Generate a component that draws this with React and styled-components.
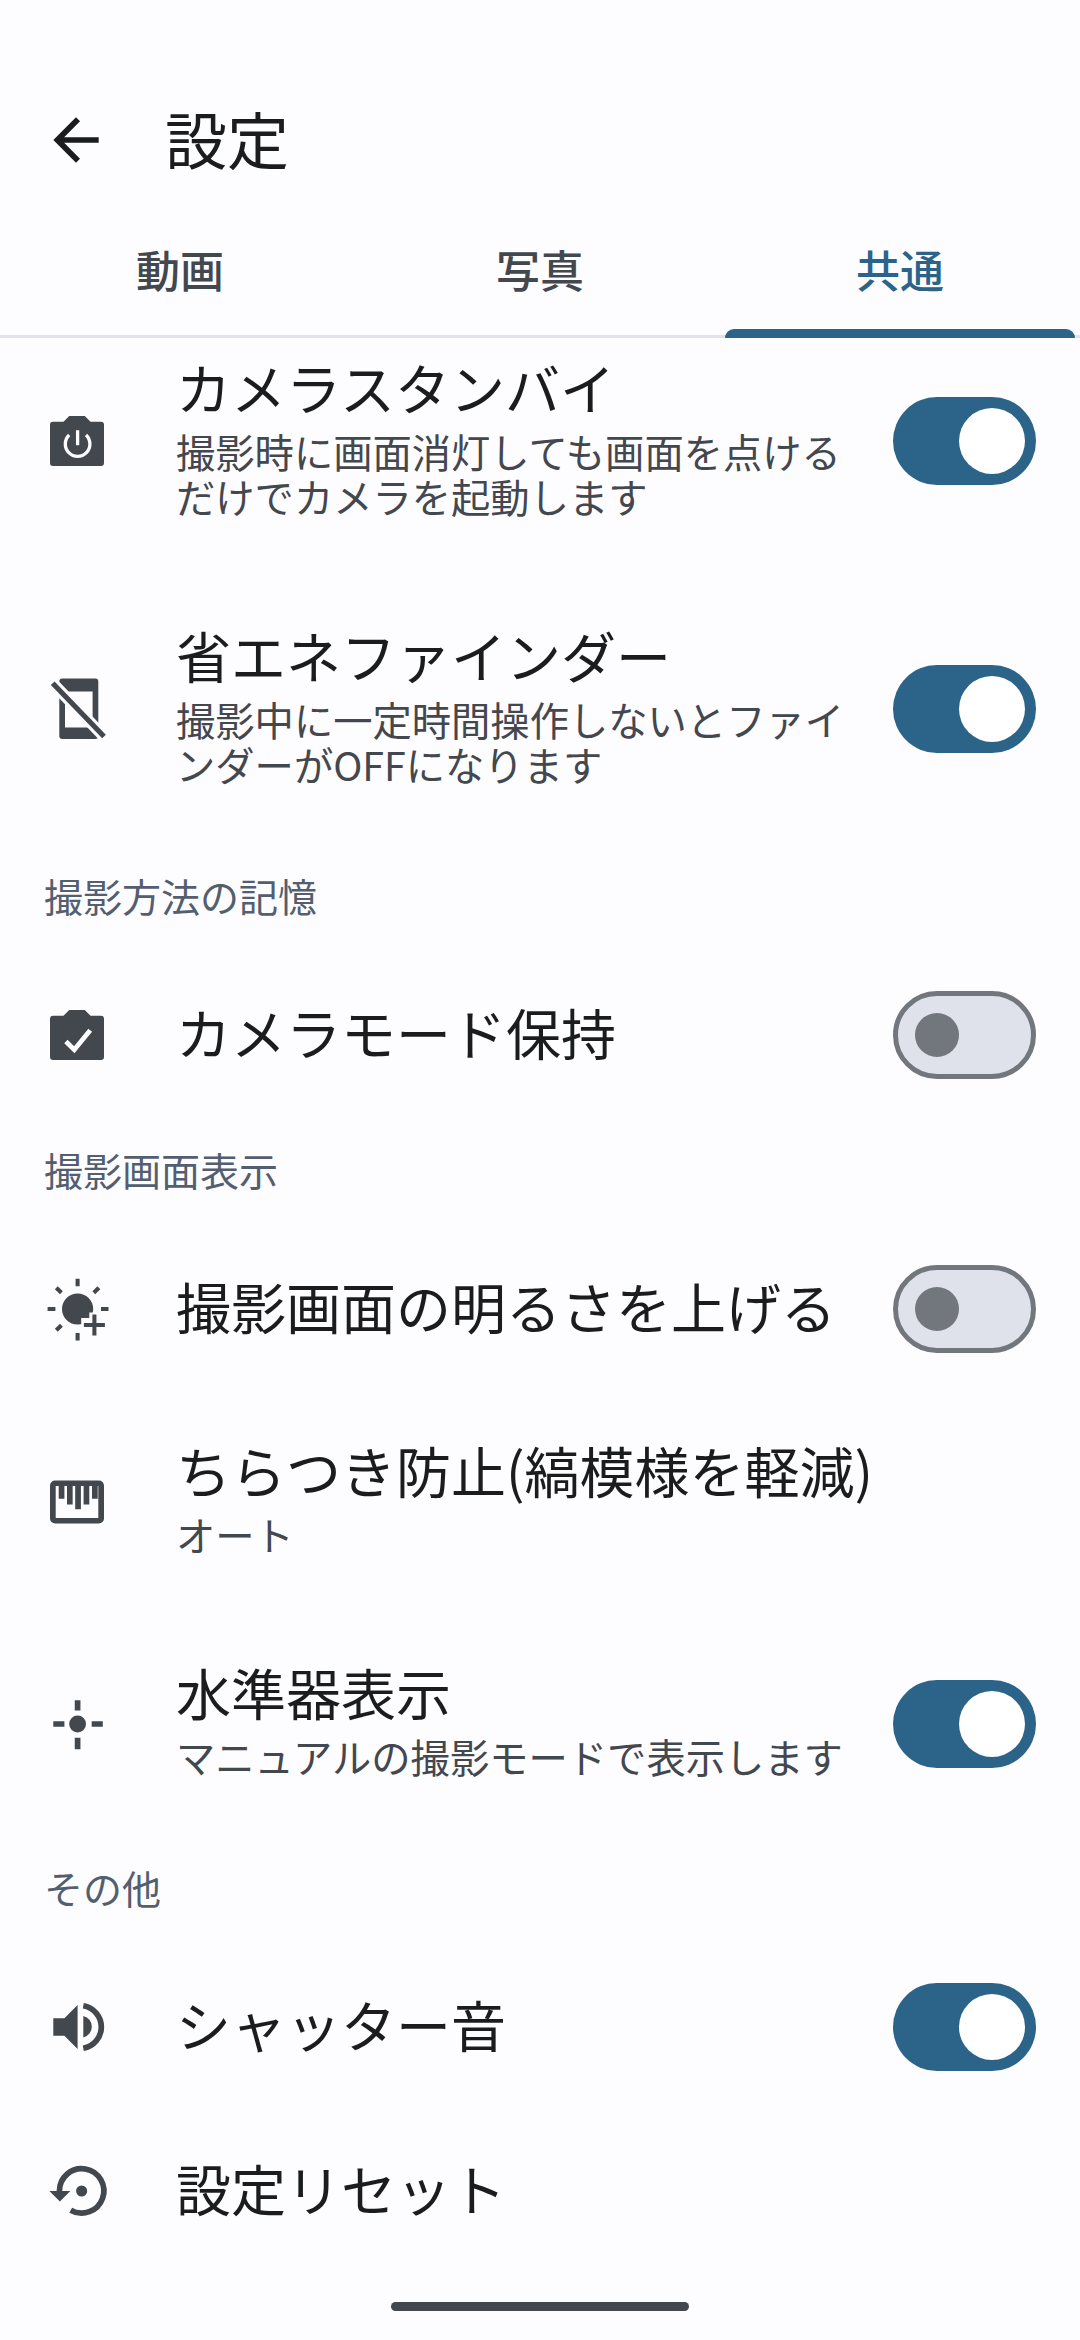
import React from "react";
import styled, { createGlobalStyle } from "styled-components";

const bg = "#fdfcff";
const ink = "#1a1c1e";
const muted = "#43474e";
const accent = "#2c6389";

const GlobalStyle = createGlobalStyle`
  html, body {
    margin: 0;
    padding: 0;
    background: ${bg};
  }
  * {
    box-sizing: border-box;
  }
`;

const Icon = ({ children }) => (
  <IconSvg viewBox="0 0 24 24" fill={muted}>
    {children}
  </IconSvg>
);

const cameraBody =
  "M9.4 3.7h5.2l1.9 1.9H20a1 1 0 0 1 1 1v12.7a1 1 0 0 1-1 1H4a1 1 0 0 1-1-1V6.6a1 1 0 0 1 1-1h3.5z";

const CameraPowerIcon = () => (
  <Icon>
    <path d={cameraBody} />
    <g fill="none" stroke={bg} strokeWidth="1.1">
      <path d="M9.4 10a4.1 4.1 0 1 0 5.6 0" />
      <path d="M12.2 8.4v5" />
    </g>
  </Icon>
);

const PhoneOffIcon = () => (
  <Icon>
    <path
      fillRule="evenodd"
      d="M7.1 1.8h11a1 1 0 0 1 1 1V21a1 1 0 0 1-1 1h-11a1 1 0 0 1-1-1V2.8a1 1 0 0 1 1-1zM8 6.2v12h9.2v-12z"
    />
    <path d="M3.9 3.4L21 21.2" stroke={bg} strokeWidth="3.8" fill="none" />
    <path d="M3.9 3.4L21 21.2" stroke={muted} strokeWidth="1.7" fill="none" />
  </Icon>
);

const CameraCheckIcon = () => (
  <Icon>
    <path d={cameraBody} />
    <path d="M8.3 14.2l2.8 2.7 5.3-6.5" fill="none" stroke={bg} strokeWidth="1.6" />
  </Icon>
);

const BrightnessIcon = () => (
  <Icon>
    <circle cx="12.2" cy="12" r="5.2" />
    <path d="M16.1 13.2H24V24H13.4v-9h2.7z" fill={bg} />
    <g fill="none" stroke={muted} strokeWidth="1.35">
      <path d="M12.2 1.9v2.5M12.2 20v2.5M2.2 12h2.6M20 12h2.5" />
      <path d="M5.1 4.9l1.7 1.7M19.3 4.9l-1.7 1.7M5.1 19.1l1.7-1.7" />
      <path d="M14.3 17.3h7M17.8 13.8v7" />
    </g>
  </Icon>
);

const PianoIcon = () => (
  <Icon>
    <path
      fillRule="evenodd"
      d="M4.7 4.8h14.6a1.7 1.7 0 0 1 1.7 1.7v11a1.7 1.7 0 0 1-1.7 1.7H4.7A1.7 1.7 0 0 1 3 17.5v-11a1.7 1.7 0 0 1 1.7-1.7zM4.9 6.65V17.3h14.2V6.65h-.2v4.25H17V6.65h-.9v6.15h-1.9V6.65h-.9v7.75h-1.9V6.65h-.85v6.15H8.67V6.65H7.8v4.25H5.9V6.65z"
    />
  </Icon>
);

const LevelIcon = () => (
  <Icon>
    <circle cx="12.2" cy="12" r="2.8" />
    <path
      d="M12.2 4.1v3.4M12.2 16.6v3.8M4.1 12h3.7M16.9 12h3.7"
      fill="none"
      stroke={muted}
      strokeWidth="1.9"
    />
  </Icon>
);

const SpeakerIcon = () => (
  <Icon>
    <path d="M4.1 9.1h3.7l4.4-4.4v14.6l-4.4-4.4H4.1z" />
    <path d="M14.1 8.3a3.7 3.7 0 0 1 0 7.2z" />
    <path d="M14.1 4.9a7.2 7.2 0 0 1 0 14.2" fill="none" stroke={muted} strokeWidth="1.9" />
  </Icon>
);

const ResetIcon = () => (
  <Icon>
    <path d="M6.15 12A7.4 7.4 0 1 1 9.9 18.4" fill="none" stroke={muted} strokeWidth="1.9" />
    <path d="M2.8 12h7l-3.5 3.5z" />
    <circle cx="13.55" cy="12" r="1.85" />
  </Icon>
);

const tabs = [
  { label: "動画", color: muted },
  { label: "写真", color: muted },
  { label: "共通", color: accent, active: true },
];

const SettingRow = ({ icon, title, sub, toggle, height }) => (
  <Row $height={height}>
    <IconSlot>{icon}</IconSlot>
    <TextBlock>
      <Title>{title}</Title>
      {sub && <Sub>{sub}</Sub>}
    </TextBlock>
    {toggle && (
      <Toggle $on={toggle === "on"}>
        <Thumb $on={toggle === "on"} />
      </Toggle>
    )}
  </Row>
);

const App = () => {
  return (
    <Page>
      <GlobalStyle />
      <Header>
        <BackButton>
          <svg viewBox="0 0 24 24" width="68" height="68" fill={ink}>
            <path d="M20 11H7.83l5.59-5.59L12 4l-8 8 8 8 1.41-1.41L7.83 13H20v-2z" />
          </svg>
        </BackButton>
        <HeaderTitle>設定</HeaderTitle>
      </Header>
      <TabBar>
        {tabs.map((tab) => (
          <Tab key={tab.label} $color={tab.color} $active={tab.active}>
            {tab.label}
          </Tab>
        ))}
      </TabBar>
      <List>
        <ScrollContent>
          <SettingRow
            height={268}
            icon={<CameraPowerIcon />}
            title="カメラスタンバイ"
            sub={"撮影時に画面消灯しても画面を点ける\nだけでカメラを起動します"}
            toggle="on"
          />
          <SettingRow
            height={268}
            icon={<PhoneOffIcon />}
            title="省エネファインダー"
            sub={"撮影中に一定時間操作しないとファイ\nンダーがOFFになります"}
            toggle="on"
          />
          <SectionHead>撮影方法の記憶</SectionHead>
          <SettingRow icon={<CameraCheckIcon />} title="カメラモード保持" toggle="off" />
          <SectionHead>撮影画面表示</SectionHead>
          <SettingRow icon={<BrightnessIcon />} title="撮影画面の明るさを上げる" toggle="off" />
          <SettingRow
            height={222}
            icon={<PianoIcon />}
            title="ちらつき防止(縞模様を軽減)"
            sub="オート"
          />
          <SettingRow
            height={222}
            icon={<LevelIcon />}
            title="水準器表示"
            sub="マニュアルの撮影モードで表示します"
            toggle="on"
          />
          <SectionHead>その他</SectionHead>
          <SettingRow icon={<SpeakerIcon />} title="シャッター音" toggle="on" />
          <SettingRow icon={<ResetIcon />} title="設定リセット" />
        </ScrollContent>
        <HomeBar />
      </List>
    </Page>
  );
};

const Page = styled.div`
  width: 1080px;
  height: 2340px;
  display: flex;
  flex-direction: column;
  overflow: hidden;
  background: ${bg};
  color: ${ink};
  font-family: "Noto Sans CJK JP", "Noto Sans", sans-serif;
`;

const Header = styled.header`
  flex: none;
  height: 210px;
  padding-top: 70px;
  display: flex;
  align-items: center;
`;

const BackButton = styled.div`
  width: 165px;
  padding-left: 42px;
  display: flex;
  align-items: center;
`;

const HeaderTitle = styled.h1`
  margin: 0 0 5px;
  font-size: 62px;
  font-weight: 400;
  line-height: 80px;
`;

const TabBar = styled.nav`
  flex: none;
  height: 128px;
  display: grid;
  grid-template-columns: repeat(3, 1fr);
  border-bottom: 3px solid #e0e2ec;
`;

const Tab = styled.div`
  position: relative;
  display: flex;
  align-items: center;
  justify-content: center;
  padding-bottom: 7px;
  font-size: 44px;
  font-weight: 500;
  color: ${(p) => p.$color};

  ${(p) =>
    p.$active &&
    `
    &::after {
      content: "";
      position: absolute;
      left: 5px;
      right: 5px;
      bottom: -3px;
      height: 9px;
      border-radius: 9px 9px 0 0;
      background: ${accent};
    }
  `}
`;

const List = styled.main`
  position: relative;
  flex: 1;
  overflow: hidden;
`;

const ScrollContent = styled.div`
  margin-top: -31px;
`;

const Row = styled.div`
  height: ${(p) => p.$height || 164}px;
  padding-right: 44px;
  display: flex;
  align-items: center;
`;

const IconSlot = styled.div`
  flex: none;
  width: 176px;
  padding-left: 41px;
  display: flex;
  align-items: center;
`;

const IconSvg = styled.svg`
  display: block;
  width: 72px;
  height: 72px;
`;

const TextBlock = styled.div`
  flex: 1;
  min-width: 0;
  padding-bottom: 7px;
`;

const Title = styled.div`
  font-size: 55px;
  line-height: 83px;
  white-space: nowrap;
`;

const Sub = styled.div`
  margin-bottom: 13px;
  font-size: 39.3px;
  line-height: 45px;
  white-space: pre-line;
  color: ${muted};
`;

const Toggle = styled.div`
  flex: none;
  width: 143px;
  height: 88px;
  border-radius: 44px;
  display: flex;
  align-items: center;
  background: ${(p) => (p.$on ? accent : "#dfe2ea")};
  border: ${(p) => (p.$on ? "none" : "5px solid #72767d")};
  padding: ${(p) => (p.$on ? "0 11px" : "0 17px")};
  justify-content: ${(p) => (p.$on ? "flex-end" : "flex-start")};
`;

const Thumb = styled.div`
  width: ${(p) => (p.$on ? 66 : 44)}px;
  height: ${(p) => (p.$on ? 66 : 44)}px;
  border-radius: 50%;
  background: ${(p) => (p.$on ? "#ffffff" : "#72767d")};
`;

const SectionHead = styled.div`
  height: 110px;
  padding-left: 44px;
  padding-bottom: 6px;
  display: flex;
  align-items: center;
  font-size: 39px;
  color: #535f70;
`;

const HomeBar = styled.div`
  position: absolute;
  left: 391px;
  bottom: 29px;
  width: 298px;
  height: 9px;
  border-radius: 5px;
  background: #43474e;
`;

export default App;
